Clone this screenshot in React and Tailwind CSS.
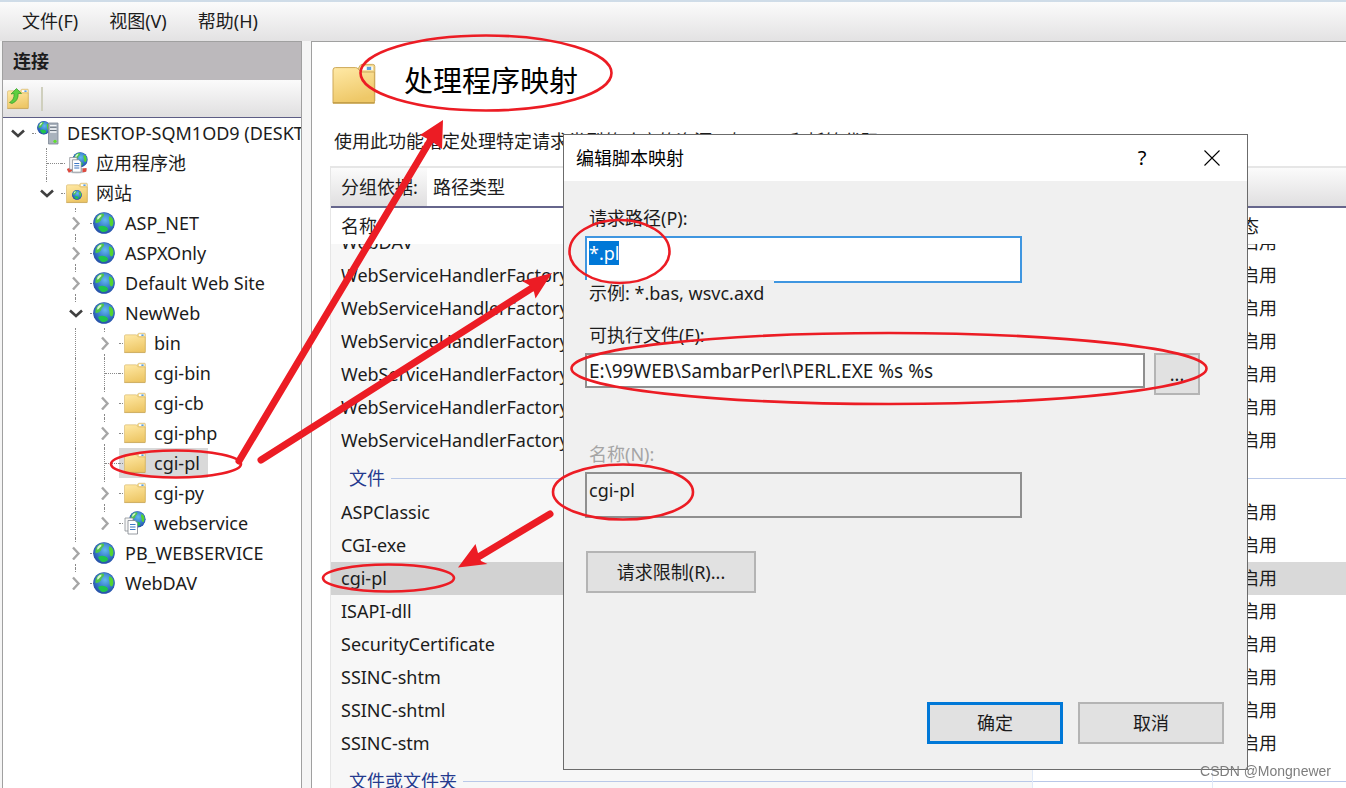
import { useLayoutEffect, useRef } from "react";

const FolderIcon = ({ className = "h-[22px] w-[22px]", children }) => (
  <svg viewBox="0 0 22 22" className={className} aria-hidden="true">
    <defs>
      <linearGradient id="folder" x1="0" y1="0" x2="0.3" y2="1">
        <stop offset="0" stopColor="#ffe9a6" />
        <stop offset="1" stopColor="#eec868" />
      </linearGradient>
    </defs>
    <path d="M13 3.5 L14 1.8 Q14.3 1.2 15 1.2 L20.4 1.2 Q21.4 1.2 21.4 2.2 L21.4 19.5 L13 19.5 Z" fill="#f3d98e" stroke="#cfae60" strokeWidth="0.5" />
    <rect x="15" y="2.2" width="5.4" height="1.9" fill="#fff" />
    <rect x="17.4" y="2.4" width="2.2" height="1.6" fill="#5b9fe0" />
    <path d="M0.5 4 Q0.5 2.8 1.7 2.8 L11.8 2.8 Q12.6 2.8 13.2 3.6 L14.4 5 L21.2 5 L21.2 20.6 L0.5 20.6 Z" fill="url(#folder)" stroke="#cda858" strokeWidth="0.5" />
    <path d="M0.5 20.4 H21.2" stroke="#b8933f" strokeWidth="0.5" />
    {children}
  </svg>
);

const GlobeShape = () => (
  <>
    <circle cx="11" cy="11" r="10.8" fill="#2b57ae" />
    <circle cx="11" cy="11" r="10.3" fill="url(#sea)" />
    <path d="M2.5 8 Q4 3 8.5 1.6 Q12.5 1.2 10.5 4.5 Q8 6 8 8.5 Q5.5 11.5 2.5 11 Z" fill="#4fc54b" />
    <path d="M4.5 5 Q6 3 8.5 2.6 Q9 4.5 6.5 6 Q5 8 4 7.5 Z" fill="#d9f5cf" />
    <path d="M16 4.5 Q18.5 4 20 7.5 Q21 11 19.5 14 Q17.5 15.5 16.5 12 Q17 9 15.8 7.5 Z" fill="#55d32f" />
    <path d="M5 15 Q9 12.8 12.5 14.5 Q16 16 14.5 18.5 Q12 20.5 9 20 Q6 18.5 5 15 Z" fill="#1fc44c" />
  </>
);

const SeaGradient = () => (
  <defs>
    <radialGradient id="sea" cx="0.55" cy="0.35" r="0.7">
      <stop offset="0" stopColor="#62b8ee" />
      <stop offset="0.6" stopColor="#3477c8" />
      <stop offset="1" stopColor="#2448a0" />
    </radialGradient>
  </defs>
);

const GlobeIcon = () => (
  <svg viewBox="2 0 22 22" className="h-[22px] w-[22px] overflow-visible" aria-hidden="true">
    <SeaGradient />
    <GlobeShape />
  </svg>
);

const ServerIcon = () => (
  <svg viewBox="0 0 22 24" className="h-6 w-[22px]" aria-hidden="true">
    <SeaGradient />
    <g transform="translate(0 0) scale(0.62)"><GlobeShape /></g>
    <path d="M11.5 2 L21 2 L21 23 L11.5 23 Z" fill="#a9b2bd" stroke="#7c8794" strokeWidth="0.8" />
    <path d="M13 4.8 H19.5 M13 8 H19.5 M13 11 H19.5" stroke="#f3f6f9" strokeWidth="1.5" />
    <path d="M13 6.2 H19.5 M13 9.5 H19.5" stroke="#5a6470" strokeWidth="0.8" />
    <circle cx="18" cy="20.3" r="1.6" fill="#5fe02c" />
  </svg>
);

const Pages = () => (
  <>
    <path d="M1 7 H9 V20 H1 Z" fill="#f7f7f7" stroke="#8b8f96" strokeWidth="0.8" />
    <path d="M4 9.5 H11 L13.5 12 V23 H4 Z" fill="#fff" stroke="#7e838b" strokeWidth="0.8" />
    <path d="M6 13.5 H11.5 M6 16 H11.5 M6 18.5 H11.5" stroke="#3f79c4" strokeWidth="1.1" />
  </>
);

const WebAppIcon = () => (
  <svg viewBox="0 0 22 24" className="h-6 w-[22px]" aria-hidden="true">
    <SeaGradient />
    <g transform="translate(5 0) scale(0.76)"><GlobeShape /></g>
    <Pages />
  </svg>
);

const PoolIcon = () => (
  <svg viewBox="0 0 24 24" className="h-6 w-[22px]" aria-hidden="true">
    <SeaGradient />
    <g transform="translate(7 0) scale(0.76)"><GlobeShape /></g>
    <path d="M1 19 Q1 23.5 12 23.5 Q23 23.5 23 19 Q20 17 12 17 Q3 17 1 19 Z" fill="#c9ced4" />
    <path d="M1 18.5 L5 17 L7 20.5 L3 22.5 Z M18 18 L22.5 17.5 L22 21.5 L18 22 Z" fill="#e0483c" />
    <g transform="translate(3 -1)"><Pages /></g>
  </svg>
);

const SitesIcon = () => (
  <FolderIcon>
    <SeaGradient />
    <g transform="translate(6 8) scale(0.45)"><GlobeShape /></g>
  </FolderIcon>
);

const ConnectIcon = () => (
  <FolderIcon>
    <path d="M2.5 14.5 Q7.5 12 7 5.5 L4 6 L9.5 0.5 L14.5 5.5 L11.2 5.5 Q11.5 13 5 15.5 Z" fill="#5fcf3f" stroke="#2f9a28" strokeWidth="0.7" />
  </FolderIcon>
);

const Chevron = ({ open }) => (
  <svg viewBox="0 0 14 14" className="h-3.5 w-3.5 shrink-0" fill="none" aria-hidden="true">
    {open ? (
      <path d="M1 4.5 L7 10 L13 4.5" stroke="#404040" strokeWidth="2.6" />
    ) : (
      <path d="M4 1.5 L9.5 7.5 L4 13.5" stroke="#a6a6a6" strokeWidth="2.4" />
    )}
  </svg>
);

const tree = [
  { level: 0, name: "DESKTOP-SQM1OD9 (DESKTOP-SQM1OD9\\Administrator)", icon: ServerIcon, open: true, first: true, last: true },
  { level: 1, name: "应用程序池", icon: PoolIcon, leaf: true },
  { level: 1, name: "网站", icon: SitesIcon, open: true, last: true },
  { level: 2, name: "ASP_NET", icon: GlobeIcon },
  { level: 2, name: "ASPXOnly", icon: GlobeIcon },
  { level: 2, name: "Default Web Site", icon: GlobeIcon },
  { level: 2, name: "NewWeb", icon: GlobeIcon, open: true },
  { level: 3, name: "bin", icon: FolderIcon },
  { level: 3, name: "cgi-bin", icon: FolderIcon, leaf: true },
  { level: 3, name: "cgi-cb", icon: FolderIcon },
  { level: 3, name: "cgi-php", icon: FolderIcon },
  { level: 3, name: "cgi-pl", icon: FolderIcon, leaf: true, selected: true },
  { level: 3, name: "cgi-py", icon: FolderIcon },
  { level: 3, name: "webservice", icon: WebAppIcon, last: true },
  { level: 2, name: "PB_WEBSERVICE", icon: GlobeIcon },
  { level: 2, name: "WebDAV", icon: GlobeIcon, last: true },
];

function TreeRow({ level, name, icon: Icon, open, leaf, first, last, selected }) {
  return (
    <li className="flex h-[30px] items-stretch">
      {Array.from({ length: level }, (_, i) => (
        <span key={i} className="flex w-[29px] shrink-0 justify-center">
          {i === 2 && <span className="border-l border-dotted border-[#8a8a8a]" />}
        </span>
      ))}
      {leaf ? (
        <span className="flex w-[29px] shrink-0 items-center justify-end">
          <span className="h-full border-l border-dotted border-[#8a8a8a]" />
          <span className="w-3.5 border-t border-dotted border-[#8a8a8a]" />
        </span>
      ) : (
        <span className="flex w-[29px] shrink-0 flex-col items-center justify-between">
          <span className={first ? "h-1" : "h-1 border-l border-dotted border-[#8a8a8a]"} />
          <Chevron open={open} />
          <span className={last || open ? "h-1" : "h-1 border-l border-dotted border-[#8a8a8a]"} />
        </span>
      )}
      <a href="#node" className={selected ? "flex items-center bg-[#d9d9d9] pr-2" : "flex items-center pr-2"}>
        <span className="mr-px w-1 border-t border-dotted border-[#8a8a8a]" />
        <Icon />
        <span className="pl-2 whitespace-nowrap">{name}</span>
      </a>
    </li>
  );
}

const factories = ["WebDAV", ...Array(6).fill("WebServiceHandlerFactory")];
const files = ["ASPClassic", "CGI-exe", "cgi-pl", "ISAPI-dll", "SecurityCertificate", "SSINC-shtm", "SSINC-shtml", "SSINC-stm"];

const HandlerRow = ({ name }) => {
  const selected = name === "cgi-pl";
  return (
    <tr className={selected ? "h-[33px] bg-[#d9d9d9]" : "h-[33px]"}>
      <td className={selected ? "bg-[#d2d2d2] pl-2.5" : "bg-[#f7f7f7] pl-2.5"}>{name}</td>
      <td />
      <td className="pl-2.5">已启用</td>
    </tr>
  );
};

const GroupRow = ({ name }) => (
  <tr className="h-[39px]">
    <th scope="rowgroup" className="border-r border-[#e1eaf8] bg-[#f7f7f7] pt-1 pl-[18px] text-left font-normal text-[#253a8e]">
      <span className="flex items-center gap-1.5">
        {name}
        <span className="h-px grow bg-[#b9c8e8]" />
      </span>
    </th>
    <td className="border-r border-[#e1eaf8] pt-1">
      <span className="block h-px bg-[#b9c8e8]" />
    </td>
    <td className="pt-1">
      <span className="block h-px bg-[#b9c8e8]" />
    </td>
  </tr>
);

function HandlerList() {
  const box = useRef(null);
  useLayoutEffect(() => {
    box.current.scrollTop = 18;
  }, []);
  return (
    <div ref={box} className="min-h-0 grow overflow-hidden">
      <table className="w-full table-fixed border-separate border-spacing-0">
        <colgroup>
          <col className="w-[702px]" />
          <col className="w-[180px]" />
          <col />
        </colgroup>
        <thead>
          <tr className="h-9 text-left">
            <th className="sticky top-0 bg-white pl-2.5 font-normal">名称</th>
            <th className="sticky top-0 bg-white pl-2.5 font-normal">路径</th>
            <th className="sticky top-0 bg-white pl-2.5 font-normal">状态</th>
          </tr>
        </thead>
        <tbody>
          {factories.map((n, i) => <HandlerRow key={i} name={n} />)}
          <GroupRow name="文件" />
          {files.map((n) => <HandlerRow key={n} name={n} />)}
          <GroupRow name="文件或文件夹" />
        </tbody>
      </table>
    </div>
  );
}

function EditDialog() {
  const path = useRef(null);
  useLayoutEffect(() => {
    path.current.focus();
    path.current.select();
  }, []);
  return (
    <section role="dialog" aria-label="编辑脚本映射" className="absolute top-[134px] left-[563px] flex h-[636px] w-[685px] flex-col border border-[#6b6b6b] bg-[#f0f0f0]">
      <header className="flex h-[46px] shrink-0 items-center bg-white pl-3 text-black">
        <h2 className="grow">编辑脚本映射</h2>
        <button type="button" aria-label="帮助" className="flex h-full w-[70px] items-center justify-center text-xl">?</button>
        <button type="button" aria-label="关闭" className="flex h-full w-[70px] items-center justify-center">
          <svg viewBox="0 0 16 16" className="h-4 w-4" aria-hidden="true">
            <path d="M0.5 0.5 L15.5 15.5 M15.5 0.5 L0.5 15.5" stroke="#000" strokeWidth="1.1" />
          </svg>
        </button>
      </header>
      <form className="flex grow flex-col items-start pt-6 pr-[23px] pb-[25px] pl-[21px]">
        <label htmlFor="path" className="h-[27px] pl-1">请求路径(P):</label>
        <input id="path" ref={path} defaultValue="*.pl" className="mt-1 h-[47px] w-[437px] border-2 border-[#3f96e0] bg-white pt-0.5 pb-4 pl-0.5 outline-none selection:bg-[#0078d7] selection:text-white" />
        <p className="relative -mt-[3px] h-[27px] w-[189px] bg-[#f0f0f0] pl-1">示例: *.bas, wsvc.axd</p>
        <label htmlFor="exe" className="mt-[15px] h-[27px] pl-1">可执行文件(E):</label>
        <div className="mt-1 flex items-start gap-[9px]">
          <input id="exe" defaultValue="E:\99WEB\SambarPerl\PERL.EXE %s %s" className="h-[35px] w-[560px] border-2 border-[#8f8f8f] bg-white pl-0.5 text-[19px] outline-none" />
          <button type="button" className="h-[42px] w-[46px] border-2 border-[#b4b4b4] bg-[#e1e1e1]">...</button>
        </div>
        <label htmlFor="name" className="mt-[46px] h-[27px] pl-1 text-[#a5a5a5]">名称(N):</label>
        <input id="name" readOnly defaultValue="cgi-pl" className="mt-1 h-[46px] w-[437px] border-2 border-[#8f8f8f] bg-[#f0f0f0] pb-2.5 pl-0.5 outline-none" />
        <button type="button" className="mt-[33px] ml-px h-[42px] w-[170px] border-2 border-[#b4b4b4] bg-[#e1e1e1]">请求限制(R)...</button>
        <div className="mt-auto flex gap-[15px] self-end">
          <button type="submit" className="h-[42px] w-[136px] border-3 border-[#0078d7] bg-[#e1e1e1]">确定</button>
          <button type="button" className="h-[42px] w-[146px] border-2 border-[#b4b4b4] bg-[#e1e1e1]">取消</button>
        </div>
      </form>
    </section>
  );
}

const Annotations = () => (
  <svg viewBox="0 0 1346 788" className="pointer-events-none absolute top-0 left-0 h-[788px] w-[1346px]" aria-hidden="true">
    <g fill="none" stroke="#ec1c24" strokeWidth="2.6">
      <ellipse cx="486" cy="73" rx="125.5" ry="37.5" />
      <ellipse cx="619.5" cy="251.5" rx="50" ry="31.5" />
      <ellipse cx="889" cy="368.5" rx="317.5" ry="35.5" />
      <ellipse cx="623" cy="492" rx="70" ry="27.5" />
      <ellipse cx="176" cy="464" rx="65" ry="13.5" />
      <ellipse cx="388.5" cy="578" rx="65.5" ry="13.5" />
    </g>
    <g stroke="#ec1c24" strokeWidth="7" strokeLinecap="round">
      <path d="M239 461 L430 141" />
      <path d="M261 460 L532 288" />
      <path d="M550 514 L480 556" />
    </g>
    <g fill="#ec1c24">
      <path d="M443 120 L420 135 L426 138 L434 143 L442 149 Z" />
      <path d="M552 273 L522 281 L529 285 L534 292 L535.5 298.5 Z" />
      <path d="M458 567.5 L475.5 544 L478 553 L481 561 L487.5 564 Z" />
    </g>
  </svg>
);

export default function App() {
  return (
    <div className="relative flex h-screen flex-col overflow-hidden bg-[#f5f5f5] font-['Noto_Sans','Noto_Sans_CJK_SC',sans-serif] text-[18px] leading-[27px] text-[#1c1c1c]">
      <nav className="flex h-[41px] shrink-0 items-center gap-[31px] border-t-2 border-[#cfdce8] bg-linear-to-b from-[#fbfbfb] to-[#e3e2e3] pl-[22px]">
        <button type="button">文件(F)</button>
        <button type="button">视图(V)</button>
        <button type="button">帮助(H)</button>
      </nav>
      <main className="flex min-h-0 grow">
        <aside className="ml-0.5 flex w-[300px] shrink-0 flex-col overflow-hidden border border-b-0 border-[#a0a0a0] bg-white">
          <h2 className="flex h-[38px] shrink-0 items-center bg-[#bcb9bc] pl-2.5 font-bold">连接</h2>
          <div className="flex h-[38px] shrink-0 items-center gap-3 border-b border-[#5d5d85] bg-linear-to-b from-[#fbfbfb] to-[#e0dfe0] pl-1">
            <button type="button" aria-label="连接"><ConnectIcon /></button>
            <span className="h-6 w-0.5 bg-[#cfcfbd]" />
          </div>
          <ul>
            {tree.map((n) => <TreeRow key={n.name} {...n} />)}
          </ul>
        </aside>
        <section className="ml-[9px] flex min-w-0 grow flex-col border-t border-l border-[#a0a0a0] bg-white">
          <div className="flex items-start gap-7 pt-5 pl-5">
            <FolderIcon className="h-11 w-11 shrink-0" />
            <h1 className="text-[29px] leading-[38px] text-black">处理程序映射</h1>
          </div>
          <p className="mt-[22px] pl-[22px] whitespace-nowrap">使用此功能指定处理特定请求类型的响应的资源，如 DLL 和托管代码。</p>
          <div className="mt-[11px] ml-[18px] flex min-h-0 grow flex-col border-t-2 border-l border-[#e6e6e6]">
            <div className="flex h-10 shrink-0 items-stretch border-b-2 border-[#66668c] bg-linear-to-b from-[#fbfbfb] to-[#e0dfe0]">
              <label htmlFor="group" className="flex w-24 items-center pl-2.5">分组依据:</label>
              <select id="group" className="w-[360px] appearance-none bg-white pl-1.5">
                <option>路径类型</option>
              </select>
            </div>
            <HandlerList />
          </div>
        </section>
      </main>
      <EditDialog />
      <Annotations />
      <p className="absolute right-[15px] bottom-[7px] font-['Liberation_Sans',sans-serif] text-sm leading-5 text-[#7d7d7d]">CSDN @Mongnewer</p>
    </div>
  );
}
